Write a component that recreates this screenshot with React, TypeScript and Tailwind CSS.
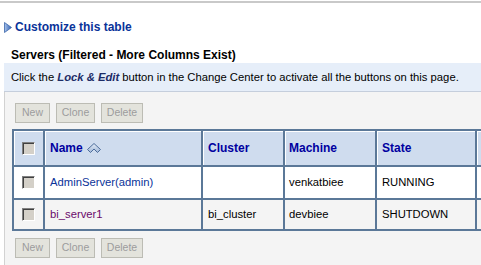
import React from 'react';

const LINK = 'text-[#0a3399]';

function Checkbox() {
  return (
    <div className="w-[13px] h-[13px] border-t border-l border-t-[#808080] border-l-[#808080] border-b border-r border-b-white border-r-white bg-[#d4d0c8] shadow-[inset_1px_1px_0_#404040]" />
  );
}

function ButtonBar() {
  const buttons = [
    { label: 'New', w: 'w-[35px]' },
    { label: 'Clone', w: 'w-[39px]' },
    { label: 'Delete', w: 'w-[42px]' },
  ];
  return (
    <div className="flex gap-[6px] ml-[3px]">
      {buttons.map((b) => (
        <div
          key={b.label}
          className={`${b.w} h-[20px] flex items-center justify-center border border-[#bcbcb4] bg-[#e3e3dc] text-[10.5px] text-[#9c9c9c]`}
        >
          {b.label}
        </div>
      ))}
    </div>
  );
}

function SortIcon() {
  return (
    <svg width="14" height="11" viewBox="0 0 14 11" className="ml-[4px]">
      <defs>
        <linearGradient id="sortg" x1="0" y1="0" x2="0" y2="1">
          <stop offset="0" stopColor="#e4ecf7" />
          <stop offset="1" stopColor="#9fb6d6" />
        </linearGradient>
      </defs>
      <path d="M0.5 6.5 L7 0.5 L13.5 6.5 L10.5 9.5 L7 6 L3.5 9.5 Z" fill="url(#sortg)" stroke="#4d6c9a" strokeWidth="1" strokeLinejoin="round" />
    </svg>
  );
}

const rows = [
  { name: 'AdminServer(admin)', visited: false, cluster: '', machine: 'venkatbiee', state: 'RUNNING', cls: 'h-[33px] border-b-2 border-[#5b7898] bg-white' },
  { name: 'bi_server1', visited: true, cluster: 'bi_cluster', machine: 'devbiee', state: 'SHUTDOWN', cls: 'h-[29px] bg-[#f4f4f4]' },
];

export default function App() {
  return (
    <div className="w-[481px] h-[265px] overflow-hidden bg-white font-['Liberation_Sans',Arial,sans-serif] text-[11.25px] text-black">
      <div className="mt-px h-[2px] bg-[#c9c9c9]" />

      {/* customize link */}
      <div className="mt-[17px] h-[14px] flex items-center pl-[4px]">
        <svg width="8" height="11" viewBox="0 0 8 11">
          <defs>
            <linearGradient id="trig" x1="0" y1="0" x2="1" y2="0">
              <stop offset="0" stopColor="#a9c4ec" />
              <stop offset="1" stopColor="#2d5cae" />
            </linearGradient>
          </defs>
          <path d="M0.5 0.5 L7.5 5.5 L0.5 10.5 Z" fill="url(#trig)" stroke="#3a64a8" strokeWidth="0.8" />
        </svg>
        <span className={`ml-[3px] text-[12px] leading-[14px] font-bold ${LINK}`}>Customize this table</span>
      </div>

      <div className="mt-[14px] h-[14px] pl-[11px] text-[12px] leading-[14px] font-bold">
        Servers (Filtered - More Columns Exist)
      </div>

      {/* info bar */}
      <div className="mt-px ml-[4px] h-[29px] border-b border-[#c5cedc] bg-[#e6eef9] pl-[7px] pt-px flex items-center whitespace-nowrap">
        <span>
          Click the <b className="italic text-[#1c2c66]">Lock &amp; Edit</b> button in the Change Center to activate all the buttons on this page.
        </span>
      </div>

      {/* panel */}
      <div className="ml-[4px] h-[200px] border-l border-[#d2d2d2] bg-[#f4f4f4] pl-[7px] pt-[11px] overflow-hidden">
        <ButtonBar />

        <div className="mt-[6px] w-max border-l-2 border-t-2 border-b-2 border-[#5b7898] flex flex-col">
          {/* header */}
          <div className="flex h-[36px] border-b-2 border-[#5b7898] bg-[#cfdcee] font-bold text-[12px] text-[#0000a0]">
            <div className="w-[31px] border-r-2 border-[#5b7898] flex items-center justify-center shadow-[inset_1px_1px_0_#fff]">
              <Checkbox />
            </div>
            <div className="w-[158px] border-r-2 border-[#5b7898] flex items-center pl-[5px] shadow-[inset_1px_1px_0_#fff]">
              Name
              <SortIcon />
            </div>
            <div className="w-[82px] border-r-2 border-[#5b7898] flex items-center pl-[5px] shadow-[inset_1px_1px_0_#fff]">Cluster</div>
            <div className="w-[92px] border-r-2 border-[#5b7898] flex items-center pl-[4px] shadow-[inset_1px_1px_0_#fff]">Machine</div>
            <div className="w-[100px] border-r-2 border-[#5b7898] flex items-center pl-[5px] shadow-[inset_1px_1px_0_#fff]">State</div>
            <div className="w-[100px] shadow-[inset_1px_1px_0_#fff]" />
          </div>

          {rows.map((r) => (
            <div key={r.name} className={`flex ${r.cls}`}>
              <div className="w-[31px] border-r-2 border-[#5b7898] flex items-center justify-center">
                <Checkbox />
              </div>
              <div className={`w-[158px] border-r-2 border-[#5b7898] flex items-center pl-[5px] ${r.visited ? 'text-[#6b0a6b]' : LINK}`}>
                {r.name}
              </div>
              <div className="w-[82px] border-r-2 border-[#5b7898] flex items-center pl-[5px]">{r.cluster}</div>
              <div className="w-[92px] border-r-2 border-[#5b7898] flex items-center pl-[4px]">{r.machine}</div>
              <div className="w-[100px] border-r-2 border-[#5b7898] flex items-center pl-[5px]">{r.state}</div>
              <div className="w-[100px]" />
            </div>
          ))}
        </div>

        <div className="mt-[7px]">
          <ButtonBar />
        </div>
      </div>
    </div>
  );
}
